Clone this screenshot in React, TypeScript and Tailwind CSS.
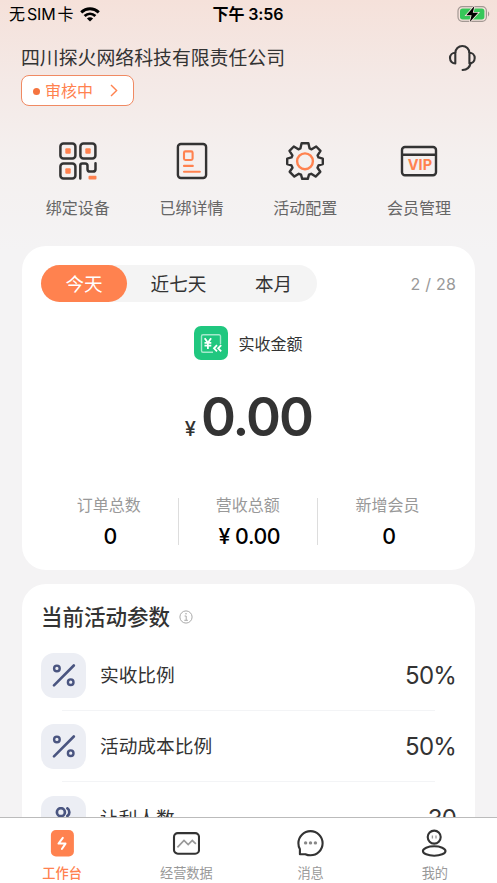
import type { ReactNode } from 'react';
import clsx from 'clsx';

const PERIODS = [
  { label: '今天', className: 'w-[86px] rounded-full bg-[#ff824f] text-white' },
  { label: '近七天', className: 'w-[103px] text-[#333]' },
  { label: '本月', className: 'w-[87px] text-[#333]' },
];

const STATS = [
  { label: '订单总数', value: '0' },
  { label: '营收总额', value: '¥ 0.00' },
  { label: '新增会员', value: '0' },
];

function WifiIcon() {
  return (
    <svg width="20" height="15" viewBox="0 0 20 15" fill="none" stroke="#000" strokeWidth="2.9">
      <path d="M1.2 5.4C6.3.6 13.7.6 18.8 5.4" />
      <path d="M4.6 9c3.2-2.9 7.6-2.9 10.8 0" />
      <path d="M10 14.6 6.9 11.5c1.8-1.6 4.4-1.6 6.2 0z" fill="#000" stroke="none" />
    </svg>
  );
}

function BatteryIcon() {
  return (
    <svg width="33" height="18" viewBox="0 0 33 18" fill="none">
      <rect x="1" y="1.7" width="28.4" height="14.6" rx="4.2" stroke="#a39893" strokeWidth="1.2" />
      <rect x="3" y="3.6" width="24.4" height="10.8" rx="2.6" fill="#36c759" />
      <path d="M31 6.6c1.6.5 1.6 4.3 0 4.8z" fill="#a39893" />
      <path
        d="M17.4 1 9.3 10.2h5.3L12.8 17l8.4-9.2h-5.4z"
        fill="#000"
        stroke="#f4e5df"
        strokeWidth="1.6"
        paintOrder="stroke"
      />
    </svg>
  );
}

function HeadsetIcon() {
  return (
    <svg width="28" height="28" viewBox="0 0 28 28" fill="none" stroke="#333" strokeWidth="2.1" strokeLinejoin="round">
      <path d="M7.3 9.1a7.05 7.05 0 0 1 14.1 0" />
      <path d="M7.3 8.8v10.6c-2.9 0-5.3-2.2-5.3-5.3s2.4-5.3 5.3-5.3z" />
      <path d="M21.4 8.8v10.6c2.9 0 5.3-2.2 5.3-5.3s-2.4-5.3-5.3-5.3z" />
      <path d="M22.6 19.2c-.8 3.9-3.7 6.5-8 6.8" strokeLinecap="round" />
    </svg>
  );
}

function QrIcon() {
  return (
    <svg width="38" height="38" viewBox="0 0 38 38" fill="none" stroke="#333" strokeWidth="2.5">
      <rect x="1.4" y="1.4" width="15" height="15" rx="3" />
      <rect x="21.4" y="1.4" width="15" height="15" rx="3" />
      <rect x="1.4" y="21.4" width="15" height="15" rx="3" />
      <path
        d="M21.3 36.6V23.4c0-1.2.8-2 2-2h2.8c1.5 0 2.4 1 2.4 2.4v3.4c0 1.5.9 2.4 2.4 2.4h3c1.5 0 2.6-1 2.6-2.4v-6"
        strokeLinecap="round"
      />
      <g fill="#ff824f" stroke="none">
        <rect x="6.3" y="6.3" width="5.4" height="5.4" rx="1" />
        <rect x="26.3" y="6.3" width="5.4" height="5.4" rx="1" />
        <rect x="6.3" y="26.3" width="5.4" height="5.4" rx="1" />
        <rect x="29.5" y="33.7" width="8" height="3.8" rx="1" />
      </g>
    </svg>
  );
}

function DetailIcon() {
  return (
    <svg width="38" height="38" viewBox="0 0 38 38" fill="none">
      <rect x="4.9" y="2" width="28.2" height="34" rx="3" stroke="#333" strokeWidth="2.4" />
      <g stroke="#ff824f" strokeWidth="2.1" strokeLinecap="round">
        <rect x="11" y="9.4" width="8.6" height="8.6" rx="1.4" />
        <path d="M11 23.9h8.8M11 29.8h15.8" />
      </g>
    </svg>
  );
}

function GearIcon() {
  return (
    <svg width="38" height="38" viewBox="0 0 38 38" fill="none">
      <path
        d="M15.6 1.2h6.8l1.2 5.2 2 .9 4.6-2.8 4.3 4.3-2.9 4.6.9 2 4.3 1.2v5.4l-4.3 1.4-1 2.4 2.8 4-4.7 4.8-4.4-2.8-2.2.9-1.2 4.1h-5.6l-1.2-4.1-2.2-.9-4.4 2.8-4.7-4.8 2.8-4-1-2.4-4.3-1.4v-5.4l4.3-1.2.9-2-2.9-4.6 4.3-4.3 4.6 2.8 2-.9z"
        stroke="#333"
        strokeWidth="2.4"
        strokeLinejoin="round"
      />
      <circle cx="19" cy="19.3" r="7.9" stroke="#ff824f" strokeWidth="2.4" />
    </svg>
  );
}

function VipIcon() {
  return (
    <svg width="38" height="38" viewBox="0 0 38 38" fill="none">
      <rect x="2" y="5" width="34" height="28.2" rx="3" stroke="#333" strokeWidth="2.4" />
      <path d="M2 12.7h34" stroke="#333" strokeWidth="2.4" />
      <text
        x="19.9"
        y="28.2"
        textAnchor="middle"
        fill="#ff824f"
        className="font-['Inter',sans-serif] text-[14.5px] font-bold"
      >
        VIP
      </text>
    </svg>
  );
}

function IncomeIcon() {
  return (
    <svg width="34" height="34" viewBox="0 0 34 34" fill="none">
      <rect width="34" height="34" rx="7" fill="#20c77f" />
      <path
        d="M26.5 18V10.2a1.5 1.5 0 0 0-1.5-1.5H9a1.5 1.5 0 0 0-1.5 1.5v14.6A1.5 1.5 0 0 0 9 26.3h10"
        stroke="#a4e9cc"
        strokeWidth="1.4"
      />
      <path d="m10.7 12.2 3.2 4.6 3.2-4.6M10.5 16.9h6.8M10.5 19.7h6.8M13.9 16.6v6.5" stroke="#fff" strokeWidth="1.8" />
      <path d="m23 19.2-3 3.1 3 3.1M27.2 19.2l-3 3.1 3 3.1" stroke="#fff" strokeWidth="1.8" />
    </svg>
  );
}

function PercentIcon() {
  return (
    <svg width="24" height="24" viewBox="0 0 24 24" fill="none" stroke="#4a5580" strokeWidth="2.4">
      <circle cx="4.9" cy="4.4" r="2.8" />
      <circle cx="18.7" cy="18.2" r="2.8" />
      <path d="M21.8 1.5 2 21.3" strokeWidth="2.6" strokeLinecap="round" />
    </svg>
  );
}

function PeopleIcon() {
  return (
    <svg width="24" height="24" viewBox="0 0 24 24" fill="none" stroke="#4a5580" strokeWidth="2.7">
      <circle cx="8.9" cy="5.2" r="4" />
      <path d="M15.4 1.4c2.6 1.6 2.6 6 0 7.6" strokeLinecap="round" />
      <path d="M1.5 22c0-9 14.8-9 14.8 0z" />
    </svg>
  );
}

function InfoIcon() {
  return (
    <svg width="14" height="14" viewBox="0 0 14 14" fill="none" stroke="#aaa" strokeWidth="1">
      <circle cx="7" cy="7" r="6.1" />
      <path d="M5.6 6h1.6v4.3M5.3 10.3h3.6" />
      <circle cx="7" cy="3.7" r=".8" fill="#aaa" stroke="none" />
    </svg>
  );
}

function WorkbenchIcon() {
  return (
    <svg width="28" height="28" viewBox="0 0 28 28" fill="none">
      <rect x="2.9" y="1" width="23" height="26.4" rx="5" fill="#ff824f" />
      <path
        d="m14.8 8.8-4.3 5.8h7l-3.6 5.4"
        stroke="#fff"
        strokeWidth="2"
        strokeLinecap="round"
        strokeLinejoin="round"
      />
    </svg>
  );
}

function ChartIcon() {
  return (
    <svg width="28" height="28" viewBox="0 0 28 28" fill="none">
      <rect x="2" y="4.1" width="25" height="20.6" rx="3.8" stroke="#333" strokeWidth="2.1" />
      <path d="m5.4 18.4 6.6-7 4.2 4.2 4.1-4.1 3.6 3.3" stroke="#999" strokeWidth="1.7" />
    </svg>
  );
}

function MessageIcon() {
  return (
    <svg width="28" height="28" viewBox="0 0 28 28" fill="none">
      <path
        d="M2.9 20.2v5.1l5.5-.1c2 .9 3.2 1.1 5.1 1.1a12.1 12.1 0 1 0-12.1-12.1c0 2.4.3 4.2 1.5 6z"
        stroke="#333"
        strokeWidth="2.1"
        strokeLinejoin="round"
      />
      <g fill="#888">
        <circle cx="8.6" cy="13.9" r="1.7" />
        <circle cx="13.5" cy="13.9" r="1.7" />
        <circle cx="18.4" cy="13.9" r="1.7" />
      </g>
    </svg>
  );
}

function MeIcon() {
  return (
    <svg width="28" height="28" viewBox="0 0 28 28" fill="none" stroke="#333" strokeWidth="2.1">
      <circle cx="13.2" cy="8.1" r="6.5" />
      <ellipse cx="13.2" cy="22" rx="11.3" ry="4.7" />
      <path d="M11.4 6.6v3M15 6.6v3" stroke="#999" strokeWidth="1.3" />
    </svg>
  );
}

const SHORTCUTS = [
  { label: '绑定设备', icon: <QrIcon /> },
  { label: '已绑详情', icon: <DetailIcon /> },
  { label: '活动配置', icon: <GearIcon /> },
  { label: '会员管理', icon: <VipIcon /> },
];

const TABS = [
  { label: '工作台', icon: <WorkbenchIcon />, active: true },
  { label: '经营数据', icon: <ChartIcon />, active: false },
  { label: '消息', icon: <MessageIcon />, active: false },
  { label: '我的', icon: <MeIcon />, active: false },
];

function ParamRow({ icon, label, value }: { icon: ReactNode; label: string; value: string }) {
  return (
    <div className="flex h-[45px] items-center">
      <div className="flex size-[45px] shrink-0 items-center justify-center rounded-[13px] bg-[#eceef4]">
        {icon}
      </div>
      <span className="ml-[14px] flex-1 text-[18.7px] leading-6 text-[#333]">{label}</span>
      <span className="text-[24px] leading-6 tracking-[-0.8px] text-[#333]">{value}</span>
    </div>
  );
}

export default function App() {
  return (
    <div className="flex h-[883px] w-[497px] flex-col overflow-hidden bg-[#f4f4f4] font-['Inter','Noto_Sans_CJK_SC',sans-serif]">
      <main className="min-h-0 flex-1 overflow-hidden bg-[linear-gradient(180deg,#f5e1da_0px,#f4e9e6_80px,#f4f0ef_160px,#f4f3f4_250px)]">
        <div className="grid h-7 grid-cols-[1fr_auto_1fr] items-center pr-[7px] pl-[9px] text-[16px] leading-5 text-black">
          <div className="flex items-center gap-[7px]">
            <span className="flex gap-[2px]">
              <span>无</span>
              <span className="tracking-[-0.2px]">SIM</span>
              <span>卡</span>
            </span>
            <WifiIcon />
          </div>
          <span className="-ml-[3px] font-semibold tracking-[-0.1px]">下午 3:56</span>
          <div className="flex justify-end">
            <BatteryIcon />
          </div>
        </div>

        <header className="flex items-start justify-between pt-4 pr-[21px] pl-[21px]">
          <div>
            <h1 className="pt-[2px] text-[18.86px] leading-[26px] font-normal text-[#333]">
              四川探火网络科技有限责任公司
            </h1>
            <button className="mt-[3px] flex h-[31px] w-[113px] items-center rounded-[8px] border-[1.5px] border-[#f08a63] bg-white pl-[11px] text-[16px] text-[#ff824f]">
              <span className="mt-px size-[7px] rounded-full bg-[#f5743f]" />
              <span className="ml-[5px] leading-5">审核中</span>
              <svg width="8" height="13" viewBox="0 0 8 13" fill="none" className="ml-[17px]">
                <path d="M1 1l5.6 5.5L1 12" stroke="#ff824f" strokeWidth="1.4" />
              </svg>
            </button>
          </div>
          <HeadsetIcon />
        </header>

        <div className="mt-9 grid grid-cols-4 px-[21px]">
          {SHORTCUTS.map(({ label, icon }) => (
            <div key={label} className="flex flex-col items-center">
              {icon}
              <span className="mt-4 text-[16px] leading-6 text-[#666]">{label}</span>
            </div>
          ))}
        </div>

        <section className="mx-[22px] mt-[26px] h-[324px] rounded-[24px] bg-white px-[19px] pt-[19px]">
          <div className="flex items-center justify-between">
            <div className="flex h-[37px] rounded-full bg-[#f4f4f4]">
              {PERIODS.map(({ label, className }) => (
                <span
                  key={label}
                  className={clsx('flex items-center justify-center text-[18.6px] leading-6', className)}
                >
                  {label}
                </span>
              ))}
            </div>
            <span className="text-[16px] tracking-[0.2px] text-[#999]">2 / 28</span>
          </div>

          <div className="mt-6 flex items-center justify-center gap-2.5">
            <IncomeIcon />
            <span className="pt-px text-[16px] leading-6 text-[#333]">实收金额</span>
          </div>

          <div className="mt-[27px] flex h-[60px] items-baseline justify-center gap-[5px] text-[#333]">
            <span className="text-[20px] font-medium">¥</span>
            <span className="text-[53px] leading-[60px] font-semibold tracking-[-1.9px]">0.00</span>
          </div>

          <div className="mt-[46px] -mr-[1px] -ml-[1px] grid h-[60px] grid-cols-3">
            {STATS.map(({ label, value }, i) => (
              <div key={label} className="flex">
                <div className="flex flex-1 flex-col items-center">
                  <span className="text-[16px] leading-6 text-[#999]">{label}</span>
                  <span className="mt-[7px] pl-[3px] text-[21.3px] leading-6 font-medium tracking-[-0.4px] text-black">
                    {value}
                  </span>
                </div>
                {i < STATS.length - 1 && <div className="mt-[5px] h-[47px] w-[1.5px] bg-[#ddd]" />}
              </div>
            ))}
          </div>
        </section>

        <section className="mx-[22px] mt-[14px] h-[400px] rounded-[24px] bg-white px-[19px] pt-[18px]">
          <div className="flex items-center gap-[9px]">
            <h2 className="pt-px text-[21.5px] leading-7 font-medium text-[#333]">当前活动参数</h2>
            <InfoIcon />
          </div>
          <div className="mt-[22px]">
            <ParamRow icon={<PercentIcon />} label="实收比例" value="50%" />
            <div className="mx-[21px] mt-[12px] mb-[13px] h-px bg-[#f3f4f6]" />
            <ParamRow icon={<PercentIcon />} label="活动成本比例" value="50%" />
            <div className="mx-[21px] mt-[12px] mb-[14px] h-px bg-[#f3f4f6]" />
            <ParamRow icon={<PeopleIcon />} label="让利人数" value="30" />
          </div>
        </section>
      </main>

      <nav className="grid h-[66px] shrink-0 grid-cols-4 border-t border-[#bbb] bg-white">
        {TABS.map(({ label, icon, active }) => (
          <div key={label} className="flex flex-col items-center pt-[11px]">
            {icon}
            <span
              className={clsx(
                'mt-[7px] text-[13.2px] leading-[18px]',
                active ? 'font-medium text-[#ff824f]' : 'text-[#999]',
              )}
            >
              {label}
            </span>
          </div>
        ))}
      </nav>
    </div>
  );
}
